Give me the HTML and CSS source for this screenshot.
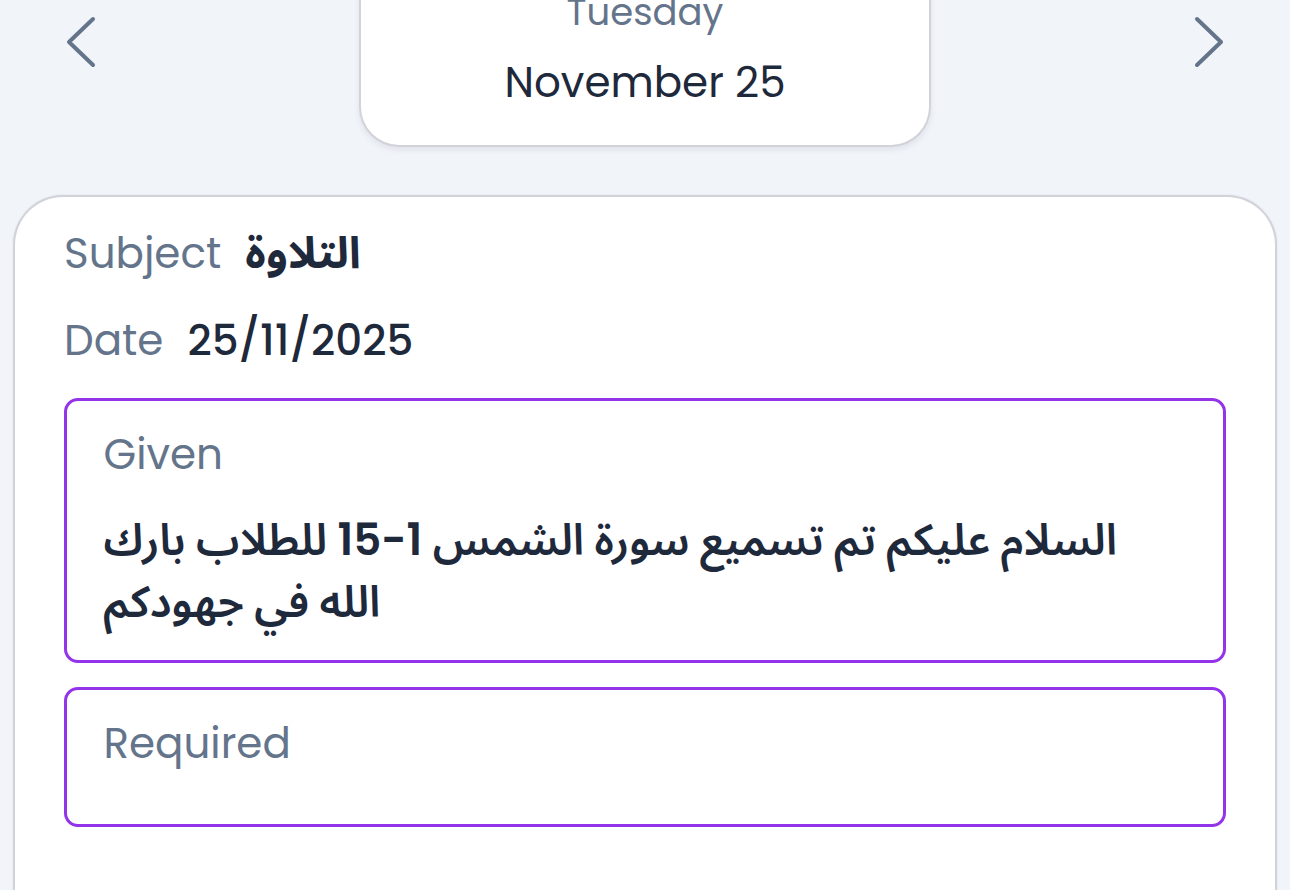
FILE: index.html
```html
<!DOCTYPE html>
<html lang="en">
<head>
<meta charset="utf-8">
<title>Homework</title>
<link rel="stylesheet" href="styles.css">
</head>
<body>
<header class="day-nav">
  <button class="nav-btn nav-prev" aria-label="Previous day">
    <svg width="34" height="56" viewBox="0 0 34 56"><polyline points="28,4 4,27 28,50" fill="none" stroke="#64748b" stroke-width="4" stroke-linecap="round" stroke-linejoin="round"/></svg>
  </button>
  <div class="day-card">
    <div class="day-name">Tuesday</div>
    <div class="day-date">November 25</div>
  </div>
  <button class="nav-btn nav-next" aria-label="Next day">
    <svg width="34" height="56" viewBox="0 0 34 56"><polyline points="6,4 30,27 6,50" fill="none" stroke="#64748b" stroke-width="4" stroke-linecap="round" stroke-linejoin="round"/></svg>
  </button>
</header>

<main class="entry-card">
  <div class="meta-row">
    <span class="meta-label">Subject</span>
    <span class="meta-value meta-subject" dir="rtl">التلاوة</span>
  </div>
  <div class="meta-row">
    <span class="meta-label">Date</span>
    <span class="meta-value">25/11/2025</span>
  </div>
  <section class="field-box field-given">
    <div class="field-label">Given</div>
    <p class="field-text">السلام عليكم تم تسميع سورة الشمس 1-15 للطلاب بارك الله في جهودكم</p>
  </section>
  <section class="field-box field-required">
    <div class="field-label">Required</div>
  </section>
</main>
</body>
</html>
```

FILE: styles.css
```css
* { box-sizing: border-box; }

html, body {
  margin: 0;
  padding: 0;
  height: 100%;
  overflow: hidden;
}

body {
  background: #f1f4f9;
  font-family: "Poppins", "Inter", "Noto Sans Arabic", "DejaVu Sans", sans-serif;
  color: #1e293b;
}

.day-nav {
  display: grid;
  grid-template-columns: 1fr auto 1fr;
  align-items: start;
  margin-top: -9px;
}

.nav-btn {
  background: none;
  border: 0;
  padding: 0;
  margin-top: 24px;
  width: 34px;
  height: 56px;
  cursor: pointer;
}

.nav-prev { justify-self: start; margin-left: 65px; }
.nav-next { justify-self: end; margin-right: 65px; }

.nav-btn svg { display: block; }

.day-card {
  width: 572px;
  background: #ffffff;
  border: 2px solid #d1d3d8;
  border-top: 0;
  border-radius: 0 0 40px 40px;
  box-shadow: 0 3px 6px rgba(30, 41, 59, 0.08);
  text-align: center;
  padding: 0 0 34px;
}

.day-name {
  font-size: 37px;
  line-height: 42px;
  color: #64748b;
}

.day-date {
  font-size: 42px;
  line-height: 56px;
  margin-top: 22px;
  color: #1e293b;
}

.entry-card {
  margin: 48px 13px 0;
  min-height: 900px;
  background: #ffffff;
  border: 2px solid #d1d3d8;
  border-bottom: 0;
  border-radius: 50px 50px 0 0;
  box-shadow: 0 0 2px rgba(30, 41, 59, 0.1);
  padding: 26px 49px 0;
}

.meta-row {
  display: flex;
  align-items: baseline;
  gap: 24px;
  font-size: 42px;
  line-height: 60px;
  margin-bottom: 27px;
}

.meta-label { color: #64748b; }

.meta-value {
  color: #1e293b;
  font-weight: 500;
}

.meta-subject {
  font-weight: 700;
  font-size: 44px;
}

.field-box {
  border: 3px solid #9333ea;
  border-radius: 14px;
  padding: 23.5px 37px 0 36.5px;
  margin-bottom: 24px;
}

.field-given { height: 265px; }
.field-required { height: 140px; }

.field-label {
  font-size: 42px;
  line-height: 60px;
  color: #64748b;
}

.field-text {
  margin: 24px 0 0;
  font-size: 43.5px;
  line-height: 62px;
  font-weight: 600;
  color: #1e293b;
}
```
